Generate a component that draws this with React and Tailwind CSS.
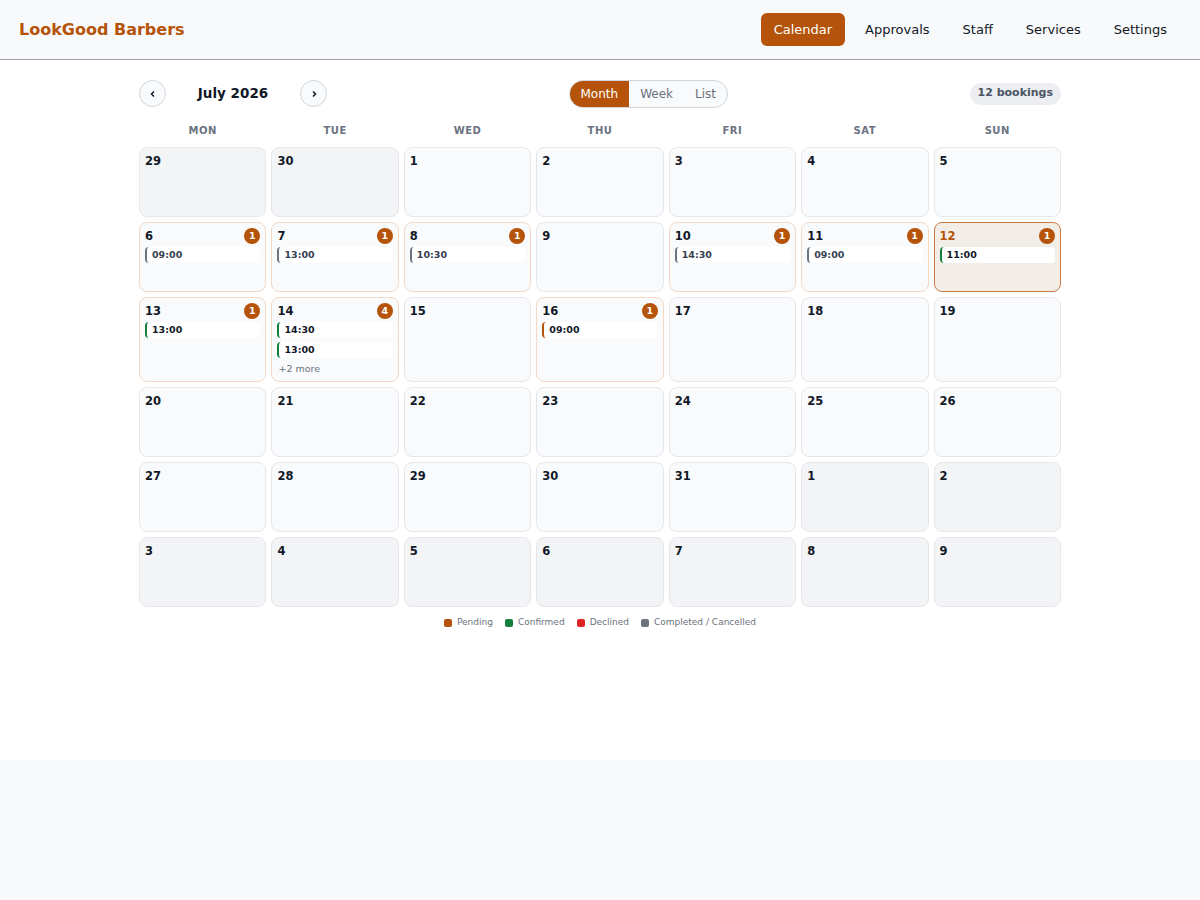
import React from 'react';

const statusBorder = {
  pending: 'border-l-[#b45309]',
  confirmed: 'border-l-[#15803d]',
  completed: 'border-l-[#6b7280]',
};

const bookings = {
  6: [{ time: '09:00', status: 'completed' }],
  7: [{ time: '13:00', status: 'completed' }],
  8: [{ time: '10:30', status: 'completed' }],
  10: [{ time: '14:30', status: 'completed' }],
  11: [{ time: '09:00', status: 'completed' }],
  12: [{ time: '11:00', status: 'confirmed' }],
  13: [{ time: '13:00', status: 'confirmed' }],
  14: [
    { time: '14:30', status: 'confirmed' },
    { time: '13:00', status: 'confirmed' },
    { time: '10:00', status: 'confirmed' },
    { time: '16:00', status: 'completed' },
  ],
  16: [{ time: '09:00', status: 'pending' }],
};

const buildDays = () => {
  const days = [29, 30].map((d) => ({ day: d, inMonth: false }));
  for (let d = 1; d <= 31; d++) days.push({ day: d, inMonth: true });
  let next = 1;
  while (days.length < 42) days.push({ day: next++, inMonth: false });
  return days;
};

const DayCell = ({ day, inMonth }) => {
  const list = inMonth ? bookings[day] || [] : [];
  const isToday = inMonth && day === 12;
  const hasBookings = list.length > 0;

  let cellClass = 'border-[#e5e7eb] bg-[#f9fafb]';
  if (!inMonth) cellClass = 'border-[#e5e7eb] bg-[#f3f4f6]';
  if (hasBookings) cellClass = 'border-[#f3d8c6] bg-[#f9fafb]';
  if (isToday) cellClass = 'border-[#c97a43] bg-[#f3ede7]';

  return (
    <div className={`min-h-[70px] rounded-lg border p-[5px] ${cellClass}`}>
      <div className="flex items-center justify-between h-4">
        <span className={`text-[11.5px] font-bold leading-4 ${isToday ? 'text-[#b45309]' : 'text-[#111827]'}`}>{day}</span>
        {hasBookings && (
          <span className="w-4 h-4 rounded-full bg-[#b45309] text-white text-[9.5px] font-bold flex items-center justify-center">
            {list.length}
          </span>
        )}
      </div>
      {hasBookings && (
        <div className="mt-[3px] flex flex-col gap-1">
          {list.slice(0, 2).map((b, i) => (
            <div
              key={i}
              className={`h-4 bg-white rounded-[4px] border-l-2 ${statusBorder[b.status]} pl-[5px] flex items-center text-[9.5px] font-bold ${b.status === 'completed' ? 'text-[#374151]' : 'text-[#111827]'}`}
            >
              {b.time}
            </div>
          ))}
          {list.length > 2 && (
            <div className="text-[9.5px] leading-[14px] text-[#6b7280] pl-[1px]">+{list.length - 2} more</div>
          )}
        </div>
      )}
    </div>
  );
};

const App = () => {
  const days = buildDays();
  const navItems = ['Calendar', 'Approvals', 'Staff', 'Services', 'Settings'];

  return (
    <div className="min-h-screen bg-[#f8f9fb]" style={{ fontFamily: '"DejaVu Sans", Verdana, sans-serif' }}>
      <header className="h-[60px] flex items-center justify-between pl-[19px] pr-5 border-b border-[#9ca3af] bg-[#f8f9fb]">
        <div className="text-[16px] font-bold text-[#b45309]">LookGood Barbers</div>
        <nav className="flex items-center gap-[7px]">
          {navItems.map((item) => (
            <a
              key={item}
              className={`h-[33px] px-[13px] flex items-center rounded-md text-[13px] ${item === 'Calendar' ? 'bg-[#b45309] text-white' : 'text-[#111827]'}`}
            >
              {item}
            </a>
          ))}
        </nav>
      </header>

      <main className="bg-white h-[700px] pt-5">
        <div className="w-[922px] mx-auto">
          <div className="flex items-center justify-between h-[27px]">
            <div className="flex items-center gap-3">
              <button className="w-[27px] h-[27px] rounded-full border border-[#d1d5db] bg-[#f9fafb] flex items-center justify-center text-[#111827]">
                <svg width="8" height="8" viewBox="0 0 8 8" fill="none" stroke="currentColor" strokeWidth="1.5"><path d="M5 1.5 2.5 4 5 6.5" /></svg>
              </button>
              <div className="w-[110px] text-center text-[13.5px] font-bold text-[#111827]">July 2026</div>
              <button className="w-[27px] h-[27px] rounded-full border border-[#d1d5db] bg-[#f9fafb] flex items-center justify-center text-[#111827]">
                <svg width="8" height="8" viewBox="0 0 8 8" fill="none" stroke="currentColor" strokeWidth="1.5"><path d="M3 1.5 5.5 4 3 6.5" /></svg>
              </button>
            </div>
            <div className="flex h-[28px] rounded-full border border-[#d1d5db] bg-[#f9fafb] overflow-hidden text-[12px]">
              <button className="px-[11px] bg-[#b45309] text-white">Month</button>
              <button className="px-[11px] text-[#6b7280]">Week</button>
              <button className="px-[11px] text-[#6b7280]">List</button>
            </div>
            <div className="h-[22px] px-2 rounded-full bg-[#eceef1] text-[11px] font-bold text-[#4b5563] flex items-center">12 bookings</div>
          </div>

          <div className="grid grid-cols-7 gap-[5px] mt-[17px] mb-[9px]">
            {['MON', 'TUE', 'WED', 'THU', 'FRI', 'SAT', 'SUN'].map((d) => (
              <div key={d} className="text-center text-[10px] leading-[14px] font-bold tracking-wider text-[#6b7280]">{d}</div>
            ))}
          </div>

          <div className="grid grid-cols-7 gap-[5px]">
            {days.map((d, i) => (
              <DayCell key={i} {...d} />
            ))}
          </div>

          <div className="flex items-center justify-center gap-3 mt-[9px] text-[9px] text-[#6b7280]">
            {[
              ['#b45309', 'Pending'],
              ['#15803d', 'Confirmed'],
              ['#dc2626', 'Declined'],
              ['#6b7280', 'Completed / Cancelled'],
            ].map(([c, label]) => (
              <div key={label} className="flex items-center gap-[5px]">
                <span className="w-2 h-2 rounded-[2px]" style={{ backgroundColor: c }} />
                {label}
              </div>
            ))}
          </div>
        </div>
      </main>
    </div>
  );
};

export default App;
